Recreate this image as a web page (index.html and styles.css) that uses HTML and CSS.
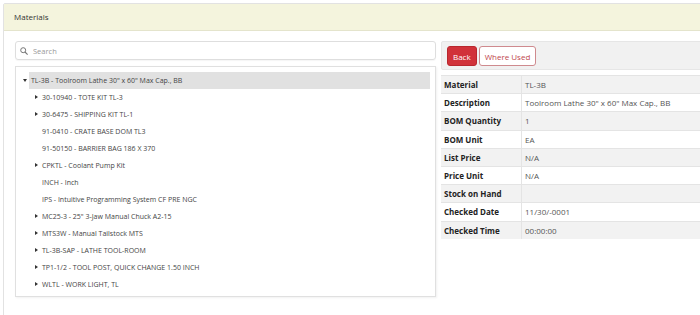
FILE: index.html
```html
<!DOCTYPE html>
<html lang="en">
<head>
    <meta charset="UTF-8">
    <title>Materials</title>
    <link rel="stylesheet" href="styles.css">
</head>
<body>
    <div class="card">
        <div class="card-header">Materials</div>
        <div class="card-body">
            <div class="col-left">
                <div class="search">
                    <svg class="search-icon" width="8" height="8" viewBox="0 0 8 8">
                        <circle cx="3.2" cy="3.2" r="2.5" fill="none" stroke="#777" stroke-width="1"/>
                        <line x1="5" y1="5" x2="7.6" y2="7.6" stroke="#777" stroke-width="1.1"/>
                    </svg>
                    <input type="text" placeholder="Search">
                </div>
                <div class="tree">
                    <ul>
                        <li>
                            <div class="node"><span class="caret down"></span><span class="anchor selected">TL-3B - Toolroom Lathe 30" x 60" Max Cap., BB</span></div>
                            <ul class="children">
                                <li><div class="node"><span class="caret right"></span><span class="anchor">30-10940 - TOTE KIT TL-3</span></div></li>
                                <li><div class="node"><span class="caret right"></span><span class="anchor">30-6475 - SHIPPING KIT TL-1</span></div></li>
                                <li><div class="node"><span class="caret"></span><span class="anchor">91-0410 - CRATE BASE DOM TL3</span></div></li>
                                <li><div class="node"><span class="caret"></span><span class="anchor">91-50150 - BARRIER BAG 186 X 370</span></div></li>
                                <li><div class="node"><span class="caret right"></span><span class="anchor">CPKTL - Coolant Pump Kit</span></div></li>
                                <li><div class="node"><span class="caret"></span><span class="anchor">INCH - Inch</span></div></li>
                                <li><div class="node"><span class="caret"></span><span class="anchor">IPS - Intuitive Programming System CF PRE NGC</span></div></li>
                                <li><div class="node"><span class="caret right"></span><span class="anchor">MC25-3 - 25" 3-Jaw Manual Chuck A2-15</span></div></li>
                                <li><div class="node"><span class="caret right"></span><span class="anchor">MTS3W - Manual Tailstock MTS</span></div></li>
                                <li><div class="node"><span class="caret right"></span><span class="anchor">TL-3B-SAP - LATHE TOOL-ROOM</span></div></li>
                                <li><div class="node"><span class="caret right"></span><span class="anchor">TP1-1/2 - TOOL POST, QUICK CHANGE 1.50 INCH</span></div></li>
                                <li><div class="node"><span class="caret right"></span><span class="anchor">WLTL - WORK LIGHT, TL</span></div></li>
                            </ul>
                        </li>
                    </ul>
                </div>
            </div>
            <div class="col-right">
                <div class="toolbar">
                    <button type="button" class="btn btn-back">Back</button>
                    <button type="button" class="btn btn-outline">Where Used</button>
                </div>
                <table class="details">
                    <tr><th>Material</th><td>TL-3B</td></tr>
                    <tr><th>Description</th><td>Toolroom Lathe 30" x 60" Max Cap., BB</td></tr>
                    <tr><th>BOM Quantity</th><td>1</td></tr>
                    <tr><th>BOM Unit</th><td>EA</td></tr>
                    <tr><th>List Price</th><td>N/A</td></tr>
                    <tr><th>Price Unit</th><td>N/A</td></tr>
                    <tr><th>Stock on Hand</th><td></td></tr>
                    <tr><th>Checked Date</th><td>11/30/-0001</td></tr>
                    <tr><th>Checked Time</th><td>00:00:00</td></tr>
                </table>
            </div>
        </div>
    </div>
</body>
</html>
```

FILE: styles.css
```css
html, body {
    overflow: hidden;
}

body {
    margin: 0;
    padding: 3px 0 0 3px;
    font-family: "Open Sans", sans-serif;
    font-size: 8px;
    color: #333;
    background: #fff;
}

.card {
    width: 880px;
    min-height: 330px;
    border: 1px solid #e2e2e2;
    border-radius: 2px;
}

.card-header {
    height: 26px;
    line-height: 26px;
    padding-left: 10px;
    background-color: #f4f4dd;
    border-bottom: 1px solid #e4e4cc;
    color: #333;
}

.card-body {
    display: grid;
    grid-template-columns: 421px 421px;
    column-gap: 5px;
    padding: 10px 0 0 11px;
}

/* left column: search + tree */
.search {
    display: flex;
    align-items: center;
    height: 19px;
    box-sizing: border-box;
    border: 1px solid #dedede;
    border-radius: 3px;
    box-shadow: 0 1px 1px rgba(0, 0, 0, 0.04);
    padding-left: 4px;
}

.search-icon {
    margin-right: 5px;
}

.search input {
    border: none;
    outline: none;
    font-family: inherit;
    font-size: 7.5px;
    padding: 0;
    color: #333;
    flex: 1;
}

.search input::placeholder {
    color: #999;
}

.tree {
    margin-top: 6px;
    height: 231px;
    box-sizing: border-box;
    border: 1px solid #e0e0e0;
    box-shadow: 1px 1px 2px rgba(0, 0, 0, 0.06);
    padding: 5px 5px 4px 4px;
    font-size: 7px;
}

.tree ul {
    list-style: none;
    margin: 0;
    padding: 0;
}

.tree .children {
    padding-left: 11px;
}

.node {
    display: flex;
    align-items: center;
    height: 17px;
}

.caret {
    width: 9px;
    height: 17px;
    flex: none;
    position: relative;
}

.caret.down::before,
.caret.right::before {
    content: "";
    position: absolute;
    top: 7px;
    left: 3px;
    border-style: solid;
}

.caret.down::before {
    border-width: 3px 2.5px 0 2.5px;
    border-color: #333 transparent transparent transparent;
}

.caret.right::before {
    top: 6px;
    left: 4px;
    border-width: 2.5px 0 2.5px 3px;
    border-color: transparent transparent transparent #333;
}

.anchor {
    flex: 1;
    line-height: 17px;
    padding-left: 2px;
    white-space: nowrap;
    color: #444;
}

.anchor.selected {
    background-color: #e1e1e1;
}

/* right column: toolbar + details */
.toolbar {
    height: 29px;
    box-sizing: border-box;
    background-color: #f1f1f1;
    border: 1px solid #e6e6e6;
    border-radius: 2px;
    padding: 4px 5px;
    display: flex;
    gap: 2px;
}

.btn {
    height: 20px;
    padding: 0 5px;
    border-radius: 3px;
    font-family: inherit;
    font-size: 8px;
    cursor: pointer;
}

.btn-back {
    background-color: #d1323a;
    border: 1px solid #b9272e;
    color: #fff;
}

.btn-outline {
    background-color: #fff;
    border: 1px solid #cf8a8e;
    color: #c0474d;
}

.details {
    margin-top: 5px;
    width: 100%;
    border-collapse: collapse;
}

.details tr {
    height: 18.2px;
}

.details tr:nth-child(odd) {
    background-color: #f2f2f2;
}

.details th,
.details td {
    padding: 0 3px;
    border-top: 1px solid #e4e4e4;
    text-align: left;
    vertical-align: middle;
}

.details th {
    width: 74px;
    font-weight: bold;
    color: #222;
    border-right: 1px solid #e4e4e4;
}

.details td {
    color: #555;
}
```
